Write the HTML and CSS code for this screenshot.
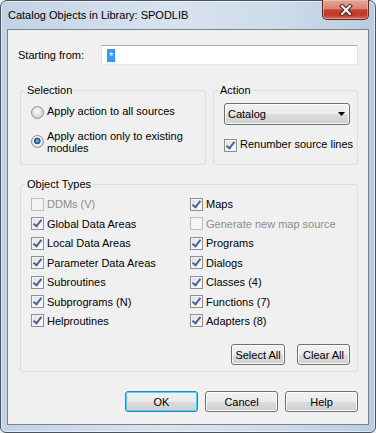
FILE: index.html
```html
<!DOCTYPE html>
<html lang="en">
<head>
    <meta charset="UTF-8">
    <meta name="viewport" content="width=device-width, initial-scale=1.0">
    <title>Catalog Objects in Library: SPODLIB</title>
    <link rel="stylesheet" href="styles.css">
</head>
<body>

    <div class="window">
        <div class="titlebar">
            <span class="title">Catalog Objects in Library: SPODLIB</span>
            <div class="close">
                <svg width="14" height="12" viewBox="0 0 14 12">
                    <path d="M3 2l8 8M11 2l-8 8" stroke="#3a2420" stroke-width="4" stroke-linecap="square" fill="none"/>
                    <path d="M3 2l8 8M11 2l-8 8" stroke="#ffffff" stroke-width="2" stroke-linecap="square" fill="none"/>
                </svg>
            </div>
        </div>

        <div class="client">
            <div class="start-row">
                <label class="start-label">Starting from:</label>
                <div class="textbox"><span class="sel">*</span></div>
            </div>

            <div class="groups">
                <fieldset class="group selection">
                    <legend>Selection</legend>
                    <div class="option"><span class="radio"></span>Apply action to all sources</div>
                    <div class="option two-line"><span class="radio on"></span><span>Apply action only to existing<br>modules</span></div>
                </fieldset>
                <fieldset class="group action">
                    <legend>Action</legend>
                    <div class="combo">
                        <span>Catalog</span>
                        <svg width="7" height="4" viewBox="0 0 7 4"><path d="M0 0h7L3.5 4z" fill="#000"/></svg>
                    </div>
                    <div class="option renumber"><span class="chk on"></span>Renumber source lines</div>
                </fieldset>
            </div>

            <fieldset class="group types">
                <legend>Object Types</legend>
                <div class="type-grid">
                    <div class="item disabled"><span class="chk"></span>DDMs (V)</div>
                    <div class="item"><span class="chk on"></span>Global Data Areas</div>
                    <div class="item"><span class="chk on"></span>Local Data Areas</div>
                    <div class="item"><span class="chk on"></span>Parameter Data Areas</div>
                    <div class="item"><span class="chk on"></span>Subroutines</div>
                    <div class="item"><span class="chk on"></span>Subprograms (N)</div>
                    <div class="item"><span class="chk on"></span>Helproutines</div>
                    <div class="item"><span class="chk on"></span>Maps</div>
                    <div class="item disabled"><span class="chk"></span>Generate new map source</div>
                    <div class="item"><span class="chk on"></span>Programs</div>
                    <div class="item"><span class="chk on"></span>Dialogs</div>
                    <div class="item"><span class="chk on"></span>Classes (4)</div>
                    <div class="item"><span class="chk on"></span>Functions (7)</div>
                    <div class="item"><span class="chk on"></span>Adapters (8)</div>
                </div>
                <div class="group-buttons">
                    <button class="btn select-all">Select All</button>
                    <button class="btn clear-all">Clear All</button>
                </div>
            </fieldset>

            <div class="dialog-buttons">
                <button class="btn wide default">OK</button>
                <button class="btn wide">Cancel</button>
                <button class="btn wide">Help</button>
            </div>
        </div>
    </div>

</body>
</html>
```

FILE: styles.css
```css
body {
    margin: 0;
    background-color: #e9edf1;
    font-family: "Liberation Sans", Arial, sans-serif;
    font-size: 11px;
    color: #000;
}
.window {
    width: 376px;
    height: 433px;
    box-sizing: border-box;
    border: 1px solid #4a535d;
    border-radius: 7px 7px 6px 6px;
    padding: 0 6px 7px 6px;
    background: linear-gradient(to right, #c2d3e6 0, #d8e3ef 45%, #cddbea 75%, #b9cce0 100%);
    box-shadow: inset 0 0 0 1px rgba(255, 255, 255, 0.55);
    display: flex;
    flex-direction: column;
}
.titlebar {
    height: 28px;
    display: flex;
    align-items: flex-start;
}
.title {
    margin: 7px 0 0 1px;
    line-height: 14px;
}
.close {
    margin-left: auto;
    margin-top: -1px;
    width: 47px;
    height: 20px;
    box-sizing: border-box;
    border: 1px solid #5e2b23;
    border-top: none;
    border-radius: 0 0 5px 5px;
    background: linear-gradient(to bottom, #e7a496 0%, #d98472 45%, #c8412d 52%, #c0392a 78%, #d46a52 100%);
    box-shadow: inset 0 0 0 1px rgba(255, 210, 200, 0.45);
    display: flex;
    align-items: center;
    justify-content: center;
}

/* client area */
.client {
    height: 396px;
    box-sizing: border-box;
    border: 1px solid #77838f;
    background-color: #f0f0f0;
    padding: 0 10px 0 12px;
}
.start-row {
    margin-top: 15px;
    height: 20px;
    display: flex;
    align-items: center;
}
.start-label {
    width: 83px;
    margin-left: -2px;
    line-height: 14px;
}
.textbox {
    flex: 1;
    height: 20px;
    box-sizing: border-box;
    border: 1px solid;
    border-color: #abadb3 #dbdfe6 #e3e9ef #e2e3ea;
    background-color: #fff;
    padding-left: 5px;
    display: flex;
    align-items: center;
}
.sel {
    background-color: #3399ff;
    color: #fff;
    height: 13px;
    line-height: 15px;
    padding: 0 2px;
}

/* group boxes */
.group {
    margin: 0;
    border: 1px solid #d5dfe5;
    border-radius: 3px;
    min-width: 0;
}
.group legend {
    padding: 0 2px;
    margin-left: -6px;
    line-height: 14px;
}
.groups {
    margin-top: 18px;
    display: flex;
    gap: 7px;
}
.selection {
    width: 186px;
    box-sizing: border-box;
    padding: 7px 10px 10px 10px;
}
.action {
    flex: 1;
    padding: 7px 7px 10px 10px;
}
.option {
    display: flex;
    align-items: flex-start;
    line-height: 14px;
    white-space: nowrap;
}
.option .radio {
    margin-top: 2px;
}
.two-line {
    margin-top: 11px;
    line-height: 12px;
}
.two-line .radio {
    margin-top: 5px;
}
.renumber {
    margin-top: 12px;
}
.renumber .chk {
    margin-top: 2px;
}

.radio {
    flex: none;
    width: 13px;
    height: 13px;
    box-sizing: border-box;
    border: 1px solid #8e8f8f;
    border-radius: 50%;
    margin-right: 3px;
    background: radial-gradient(circle at 45% 40%, #ffffff 0, #f0f0f0 2px, #d4d4d4 6px);
}
.radio.on {
    background: radial-gradient(circle at 48% 45%, #a6d2f6 0, #3a7cc4 1.6px, #1c4a86 3px, #e6e6e6 3.6px, #f6f6f6 4.4px, #d4d4d4 6px);
}
.chk {
    flex: none;
    position: relative;
    width: 13px;
    height: 13px;
    box-sizing: border-box;
    border: 1px solid #8e8f8f;
    margin-right: 3px;
    background: linear-gradient(135deg, #dcdcdc 0%, #f6f6f6 70%, #ffffff 100%);
    box-shadow: inset 0 0 0 1px #f4f4f4;
}
.chk.on::after {
    content: "";
    position: absolute;
    left: 3px;
    top: 0;
    width: 3px;
    height: 7px;
    border: solid #4a619a;
    border-width: 0 2px 2px 0;
    transform: rotate(38deg);
}

.combo {
    margin-top: -1px;
    height: 22px;
    box-sizing: border-box;
    border: 1px solid #707070;
    border-radius: 3px;
    padding: 0 4px 0 3px;
    background: linear-gradient(to bottom, #f2f2f2 0%, #ebebeb 50%, #dddddd 51%, #cfcfcf 100%);
    box-shadow: inset 0 0 0 1px #fcfcfc;
    display: flex;
    align-items: center;
    justify-content: space-between;
}

.types {
    margin-top: 12px;
    padding: 3px 7px 6px 10px;
}
.type-grid {
    display: grid;
    grid-auto-flow: column;
    grid-template-columns: 159px 1fr;
    grid-template-rows: 20px 19px 20px 19px 20px 19px 19px;
}
.item {
    display: flex;
    align-items: center;
    line-height: 14px;
    white-space: nowrap;
}
.item.disabled {
    color: #8d8d8d;
}
.item.disabled .chk {
    border-color: #bcbcbc;
    background: #f4f4f4;
}
.group-buttons {
    margin-top: 14px;
    display: flex;
    justify-content: flex-end;
    gap: 12px;
}

.btn {
    height: 21px;
    box-sizing: border-box;
    border: 1px solid #707070;
    border-radius: 3px;
    padding: 0;
    font-family: inherit;
    font-size: 11px;
    color: #000;
    background: linear-gradient(to bottom, #f2f2f2 0%, #ebebeb 50%, #dddddd 51%, #cfcfcf 100%);
    box-shadow: inset 0 0 0 1px #fcfcfc;
}
.select-all {
    width: 54px;
}
.clear-all {
    width: 53px;
}
.dialog-buttons {
    margin-top: 19px;
    display: flex;
    justify-content: flex-end;
    gap: 7px;
}
.wide {
    width: 73px;
}
.default {
    border-color: #3c7fb1;
    box-shadow: inset 0 0 0 1px #48d8fb;
}
```
